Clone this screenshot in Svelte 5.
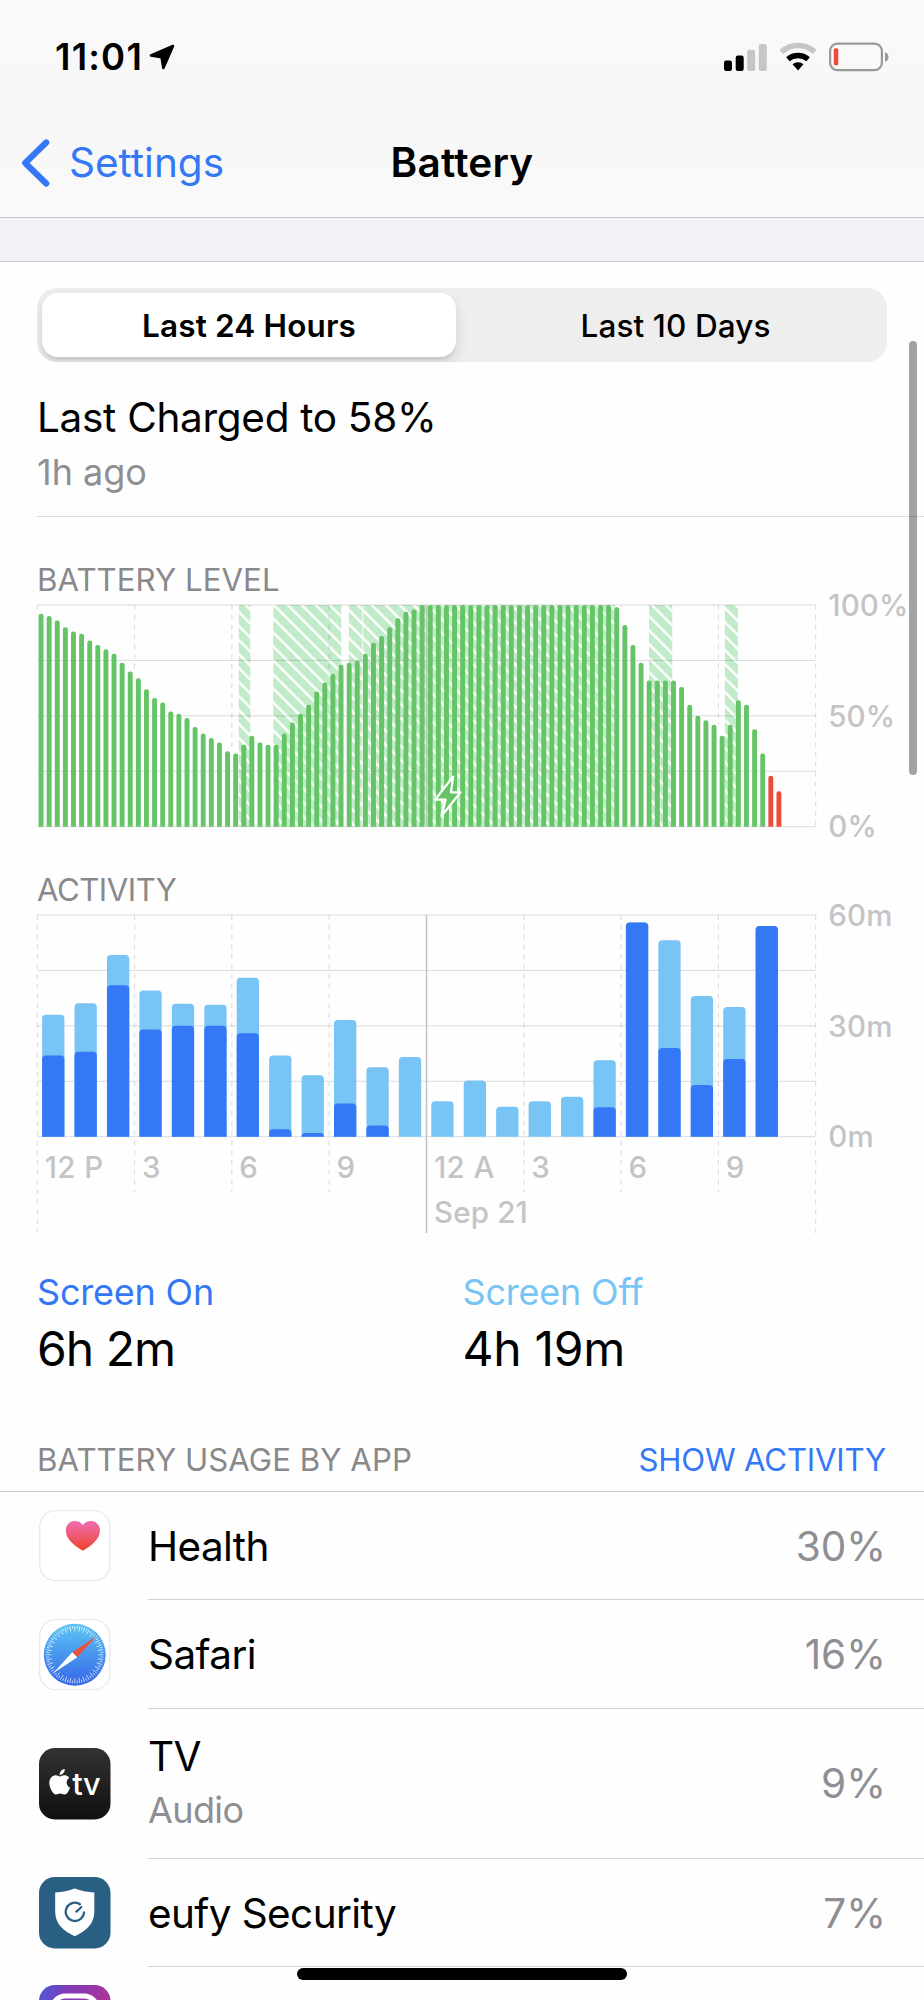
<script lang="ts">
	const levels = [
		96, 95, 93, 90, 88, 87, 84, 82, 80, 78, 74, 70, 67, 62, 58, 56, 52, 51, 49,
		45, 42, 40, 38, 34, 33, 37, 41, 38, 37, 37, 42, 47, 51, 55, 61, 65, 69, 73,
		74, 75, 78, 83, 86, 90, 94, 97, 98, 100, 100, 100, 100, 100, 100, 100, 100,
		100, 100, 100, 100, 100, 100, 100, 100, 100, 100, 100, 100, 100, 100, 100,
		100, 99, 91, 82, 74, 66, 66, 66, 66, 63, 55, 50, 48, 46, 41, 46, 57, 55, 44,
		33, 23, 16,
	];

	// Charging periods as [start, end] in plot pixels
	const charging = [
		[201.5, 213],
		[236, 304],
		[311.5, 325],
		[326, 577.6],
		[611.7, 635],
		[687.6, 700.6],
	];

	// Minutes per hour: total and screen-on part
	const activity = [
		{ total: 33, on: 22 },
		{ total: 36.1, on: 23 },
		{ total: 49.2, on: 41 },
		{ total: 39.6, on: 29 },
		{ total: 36, on: 30 },
		{ total: 35.7, on: 30 },
		{ total: 43, on: 28 },
		{ total: 22, on: 2 },
		{ total: 16.6, on: 1 },
		{ total: 31.6, on: 9 },
		{ total: 18.8, on: 3 },
		{ total: 21.6, on: 0 },
		{ total: 9.6, on: 0 },
		{ total: 15.2, on: 0 },
		{ total: 8.1, on: 0 },
		{ total: 9.6, on: 0 },
		{ total: 10.8, on: 0 },
		{ total: 20.7, on: 8 },
		{ total: 58, on: 58 },
		{ total: 53.2, on: 24 },
		{ total: 38.1, on: 14 },
		{ total: 35.1, on: 21 },
		{ total: 57, on: 57 },
	];

	const hours = ["12 P", "3", "6", "9", "12 A", "3", "6", "9"];

	const apps = [
		{ id: "health", name: "Health", detail: "", share: "30%" },
		{ id: "safari", name: "Safari", detail: "", share: "16%" },
		{ id: "tv", name: "TV", detail: "Audio", share: "9%" },
		{ id: "eufy", name: "eufy Security", detail: "", share: "7%" },
		{ id: "instagram", name: "", detail: "", share: "" },
	];

	const left = 37.3;
	const top = 6;
	const plotWidth = 778.4;
	const plotHeight = 221.7;
	const bottom = top + plotHeight;
	const section = plotWidth / 8;
	const slot = section / 12;
	const hourWidth = section / 3;

	const ticks = Array.from({ length: 72 }, (_, i) => i * 5);

	let range = $state("day");

	// Bar with only its upper corners rounded
	const bar = (x: number, w: number, h: number, r: number) => {
		const rr = Math.min(r, h);
		return `M${x} ${bottom}V${bottom - h + rr}q0 ${-rr} ${r} ${-rr}H${x + w - r}q${r} 0 ${r} ${rr}V${bottom}Z`;
	};

	// The dashed lines of the level chart stop where the bars begin
	const levelLineEnd = (i: number) => {
		if (i === 8) return bottom;
		const level = Math.max(levels[i * 12 - 1] ?? 0, levels[i * 12] ?? 0);
		return bottom - (level / 100) * plotHeight;
	};
</script>

{#snippet gridLines()}
	{#each [0, 1, 2, 3, 4] as i}
		<line
			class="grid"
			x1={left}
			x2={left + plotWidth}
			y1={top + (i * plotHeight) / 4}
			y2={top + (i * plotHeight) / 4}
		/>
	{/each}
{/snippet}

{#snippet scale(labels: string[])}
	{#each labels as label, i}
		<text class="tick" x="828.2" y={top + (i * plotHeight) / 2 + 10.7}>{label}</text>
	{/each}
{/snippet}

{#snippet appIcon(id: string)}
	<svg class="icon" viewBox="0 0 72 72">
		{#if id === "health"}
			<rect class="tile" x="0.75" y="0.75" width="70.5" height="70.5" rx="16" />
			<path
				d="M44.2 41C34 35 27 28.5 27 20.6 27 15 31 11 36 11c3.4 0 6.6 1.6 8.2 4.2C45.8 12.6 49 11 52.4 11c5 0 9 4 9 9.6 0 7.9-7 14.4-17.2 20.4Z"
				fill="url(#heart)"
			/>
		{:else if id === "safari"}
			<rect class="tile" x="0.75" y="0.75" width="70.5" height="70.5" rx="16" />
			<circle cx="36" cy="36" r="31.2" fill="url(#compass)" />
			{#each ticks as angle, i}
				<line
					x1="36"
					x2="36"
					y1="7"
					y2={i % 2 ? 10 : 12.5}
					stroke="#fff"
					stroke-opacity="0.75"
					stroke-width="0.9"
					transform="rotate({angle} 36 36)"
				/>
			{/each}
			<path d="M57.8 17.4 33.4 33.4 38.6 38.6Z" fill="#ea5140" />
			<path d="M14.6 54.4 33.4 33.4 38.6 38.6Z" fill="#fff" />
		{:else if id === "tv"}
			<rect width="72" height="72" rx="16" fill="url(#dark)" />
			<path
				transform="translate(8 21.2) scale(1.07)"
				fill="#fff"
				d="M12.152 6.896c-.948 0-2.415-1.078-3.96-1.04-2.04.027-3.91 1.183-4.961 3.014-2.117 3.675-.546 9.103 1.519 12.09 1.013 1.454 2.208 3.09 3.792 3.039 1.52-.065 2.09-.987 3.935-.987 1.831 0 2.35.987 3.96.948 1.637-.026 2.676-1.48 3.676-2.948 1.156-1.688 1.636-3.325 1.662-3.415-.039-.013-3.182-1.221-3.22-4.857-.026-3.04 2.48-4.494 2.597-4.559-1.429-2.09-3.623-2.324-4.39-2.376-2-.156-3.675 1.09-4.61 1.09zM15.53 3.83c.843-1.012 1.4-2.427 1.245-3.83-1.207.052-2.662.805-3.532 1.818-.78.896-1.454 2.338-1.273 3.714 1.338.104 2.715-.688 3.559-1.701"
			/>
			<text class="logo" x="33.6" y="47.2">tv</text>
		{:else if id === "eufy"}
			<rect width="72" height="72" rx="16" fill="#2a5f84" />
			<path
				d="M36 11.7c6 2.3 12.8 3.5 19.7 3.8V35c0 12.5-8.7 19.6-19.7 24.7C25 54.6 16.3 47.5 16.3 35V15.5C23.2 15.2 30 14 36 11.7Z"
				fill="#fff"
			/>
			<path
				d="M42 28a9.2 9.2 0 1 0 3.3 6.8M37 35.5l6.3-5.8"
				fill="none"
				stroke="#2a5f84"
				stroke-width="2.3"
			/>
		{:else}
			<rect width="72" height="72" rx="16" fill="url(#insta)" />
			<rect x="13.5" y="11" width="45" height="45" rx="13" fill="none" stroke="#fff" stroke-width="5" />
		{/if}
	</svg>
{/snippet}

<svg class="defs" width="0" height="0" aria-hidden="true">
	<defs>
		<linearGradient id="heart" x1="0" y1="0" x2="0" y2="1">
			<stop offset="0" stop-color="#f06fb4" />
			<stop offset="1" stop-color="#ec432c" />
		</linearGradient>
		<linearGradient id="compass" x1="0" y1="0" x2="0" y2="1">
			<stop offset="0" stop-color="#5cc6f4" />
			<stop offset="1" stop-color="#3565e9" />
		</linearGradient>
		<linearGradient id="dark" x1="0" y1="0" x2="0" y2="1">
			<stop offset="0" stop-color="#323232" />
			<stop offset="1" stop-color="#101010" />
		</linearGradient>
		<linearGradient id="insta" x1="0" y1="0" x2="1" y2="0.5">
			<stop offset="0" stop-color="#4560dc" />
			<stop offset="0.35" stop-color="#8139b8" />
			<stop offset="1" stop-color="#b8338f" />
		</linearGradient>
		<pattern
			id="hatch"
			width="9.9"
			height="9.9"
			patternUnits="userSpaceOnUse"
			patternTransform="rotate(45)"
		>
			<rect width="9.9" height="7.4" fill="#c1ebc9" />
		</pattern>
	</defs>
</svg>

<div class="screen">
	<header>
		<div class="status">
			<span class="time">11:01</span>
			<svg class="location" viewBox="0 0 26 26">
				<path d="M24 2 2 11.4 12.6 13.2 14.4 24Z" />
			</svg>
			<svg class="signal" viewBox="0 0 43 28">
				<rect y="17.6" width="8" height="10.4" rx="2.2" />
				<rect x="11.7" y="12.5" width="8" height="15.5" rx="2.2" />
				<rect class="off" x="23.2" y="6.7" width="8" height="21.3" rx="2.2" />
				<rect class="off" x="34.8" y="1" width="8" height="27" rx="2.2" />
			</svg>
			<svg class="wifi" viewBox="0 0 38 29">
				<path class="off" d="M2.3 9.9a25 25 0 0 1 33.4 0" />
				<path d="M8.9 17.3a15.5 15.5 0 0 1 20.2 0" />
				<path class="dot" d="M19 28.5 13.5 22.3a8.2 8.2 0 0 1 11 0Z" />
			</svg>
			<svg class="battery" viewBox="0 0 60 30">
				<rect class="case" x="1.1" y="1.6" width="51.8" height="26.6" rx="7.5" />
				<rect class="charge" x="4.8" y="6.3" width="4.5" height="17" rx="1.5" />
				<path class="cap" d="M56 10.2c4.7 1.6 4.7 8.2 0 9.8Z" />
			</svg>
		</div>
		<nav>
			<a class="back" href="#settings">
				<svg viewBox="0 0 30 50"><path d="M26.2 4.5 5.2 25l21 20.5" /></svg>
				Settings
			</a>
			<h1>Battery</h1>
		</nav>
	</header>
	<div class="band"></div>

	<main>
		<div class="segmented">
			<button class:active={range === "day"} onclick={() => (range = "day")}>
				Last 24 Hours
			</button>
			<button class:active={range === "days"} onclick={() => (range = "days")}>
				Last 10 Days
			</button>
		</div>

		<section class="charged">
			<p class="charged-title">Last Charged to 58%</p>
			<p class="charged-time">1h ago</p>
		</section>

		<h2 class="level-heading">BATTERY LEVEL</h2>
		<svg class="chart" width="924" height="272" viewBox="0 0 924 272">
			{#each charging as [from, to]}
				<rect x={left + from} y={top} width={to - from} height={plotHeight} fill="url(#hatch)" />
			{/each}
			{@render gridLines()}
			{#each [0, 1, 2, 3, 4, 5, 6, 7, 8] as i}
				{#if i === 4}
					<line class="midnight" x1={left + i * section} x2={left + i * section} y1={top} y2={bottom} />
				{:else}
					<line class="dashed" x1={left + i * section} x2={left + i * section} y1={top} y2={levelLineEnd(i)} />
				{/if}
			{/each}
			{#each levels as level, i}
				<path
					class={level > 25 ? "level" : "level low"}
					d={bar(left + i * slot + 1.3, 4.9, (level / 100) * plotHeight, 2.2)}
				/>
			{/each}
			<path class="bolt" d="M453.2 177.5 435 200.700h10.700L441.500 217l19-23.700h-9.600Z" />
			{@render scale(["100%", "50%", "0%"])}
		</svg>

		<h2 class="activity-heading">ACTIVITY</h2>
		<svg class="chart" width="924" height="361" viewBox="0 0 924 361">
			{@render gridLines()}
			{#each [0, 1, 2, 3, 4, 5, 6, 7, 8] as i}
				<line
					class={i === 4 ? "midnight" : "dashed"}
					x1={left + i * section}
					x2={left + i * section}
					y1={top}
					y2={i % 4 === 0 ? 324 : 283.5}
				/>
			{/each}
			{#each activity as { total, on }, i}
				<path
					class="screen-off"
					d={bar(left + i * hourWidth + 4.8, 22.3, (total / 60) * plotHeight, 3.8)}
				/>
				{#if on}
					<path
						class="screen-on"
						d={bar(left + i * hourWidth + 4.8, 22.3, (on / 60) * plotHeight, 3.8)}
					/>
				{/if}
			{/each}
			{#each hours as hour, i}
				<text class="tick hour" x={left + i * section + 7.4} y="268.7">{hour}</text>
			{/each}
			<text class="tick" x={left + 4 * section + 7.4} y="313.6">Sep 21</text>
			{@render scale(["60m", "30m", "0m"])}
		</svg>

		<dl class="totals">
			<div>
				<dt class="on">Screen On</dt>
				<dd>6h 2m</dd>
			</div>
			<div>
				<dt class="off">Screen Off</dt>
				<dd>4h 19m</dd>
			</div>
		</dl>

		<div class="usage-head">
			<h2>BATTERY USAGE BY APP</h2>
			<button>SHOW ACTIVITY</button>
		</div>
		<ul>
			{#each apps as app (app.id)}
				<li class={app.id}>
					{@render appIcon(app.id)}
					{#if app.name}
						<div class="row">
							<div class="label">
								<span class="name">{app.name}</span>
								{#if app.detail}<span class="detail">{app.detail}</span>{/if}
							</div>
							<span class="share">{app.share}</span>
						</div>
					{/if}
				</li>
			{/each}
		</ul>
	</main>

	<div class="scrollbar"></div>
	<div class="home"></div>
</div>

<style>
	:global(body) {
		margin: 0;
		background: #fefefe;
	}

	.defs {
		position: absolute;
	}

	.screen {
		position: relative;
		width: 924px;
		height: 2000px;
		overflow: hidden;
		background: #fefefe;
		color: #000;
		font-family: Inter, "Liberation Sans", sans-serif;
	}

	h1,
	h2,
	p,
	dl,
	dd,
	ul {
		margin: 0;
		padding: 0;
	}

	button {
		padding: 0;
		border: 0;
		background: none;
		font: inherit;
		color: inherit;
	}

	header {
		box-sizing: border-box;
		height: 218px;
		border-bottom: 1px solid #c5c5c9;
		background: linear-gradient(#fafafb, #f7f7f7 45%, #f9f9f9);
	}

	.status {
		display: flex;
		align-items: center;
		height: 113px;
		padding: 0 35px 0 55px;
	}

	.time {
		font-size: 36.5px;
		font-weight: 600;
		letter-spacing: 1.2px;
	}

	.location {
		width: 26px;
		height: 26px;
		margin-left: 6px;
	}

	.location path {
		stroke: #000;
		stroke-width: 2.6;
		stroke-linejoin: round;
	}

	.signal {
		width: 43px;
		height: 28px;
		margin-left: auto;
	}

	.signal .off {
		fill: #c6c6c6;
	}

	.wifi {
		width: 38px;
		height: 29px;
		margin: 0 12.5px 0 12px;
	}

	.wifi path {
		fill: none;
		stroke: #000;
		stroke-width: 5.4;
	}

	.wifi .off {
		stroke: #c6c6c6;
	}

	.wifi .dot {
		fill: #000;
		stroke: none;
	}

	.battery {
		width: 60px;
		height: 30px;
	}

	.battery .case {
		fill: none;
		stroke: #989898;
		stroke-width: 2.2;
	}

	.battery .charge {
		fill: #ee4d3d;
	}

	.battery .cap {
		fill: #989898;
	}

	nav {
		display: grid;
		grid-template-columns: 1fr auto 1fr;
		align-items: center;
		height: 99px;
		padding: 0 20px;
		font-size: 40.5px;
	}

	.back {
		display: flex;
		align-items: center;
		gap: 19px;
		color: #3478f6;
		text-decoration: none;
	}

	.back svg {
		width: 30px;
		height: 50px;
	}

	.back path {
		fill: none;
		stroke: #3478f6;
		stroke-width: 6.2;
		stroke-linecap: round;
		stroke-linejoin: round;
	}

	h1 {
		font-size: 40.5px;
		font-weight: 600;
		letter-spacing: 0.2px;
	}

	.band {
		height: 43px;
		border-bottom: 1px solid #c8c7cc;
		background: #f2f1f6;
	}

	.segmented {
		display: grid;
		grid-template-columns: 420px 1fr;
		box-sizing: border-box;
		height: 74px;
		margin: 26px 37px 0;
		padding: 5px;
		border-radius: 20px;
		background: #eee;
		overflow: hidden;
	}

	.segmented button {
		border-radius: 16px;
		font-size: 31.5px;
		font-weight: 500;
		letter-spacing: 0.1px;
	}

	.segmented button.active {
		margin-right: 6px;
		background: #fff;
		box-shadow:
			0 7px 14px rgba(0, 0, 0, 0.12),
			0 3px 2px rgba(0, 0, 0, 0.05);
		font-weight: 600;
		letter-spacing: 0.15px;
	}

	.segmented button:last-child:not(.active) {
		padding-left: 7px;
	}

	.charged {
		margin: 31px 0 0 37px;
		padding-bottom: 22px;
		border-bottom: 1px solid #dcdcde;
	}

	.charged-title {
		font-size: 40.5px;
		line-height: 50px;
		letter-spacing: -0.3px;
	}

	.charged-time {
		margin-top: 7px;
		font-size: 36px;
		line-height: 44px;
		color: #8e8e93;
	}

	h2 {
		padding-left: 37px;
		font-size: 31.2px;
		font-weight: 400;
		line-height: 38px;
		letter-spacing: 0.06px;
		color: #89898b;
	}

	h2.level-heading {
		margin-top: 44px;
	}

	h2.activity-heading {
		letter-spacing: -0.5px;
	}

	.chart {
		display: block;
		overflow: visible;
	}

	.grid {
		stroke: #000;
		stroke-opacity: 0.14;
		stroke-width: 1;
	}

	.dashed {
		stroke: #000;
		stroke-opacity: 0.15;
		stroke-width: 1;
		stroke-dasharray: 5 4.8;
	}

	.midnight {
		stroke: #c2c2c3;
		stroke-width: 1.5;
	}

	.level {
		fill: #65c466;
	}

	.level.low {
		fill: #eb4d3d;
	}

	.bolt {
		fill: #65c466;
		stroke: #fff;
		stroke-width: 2.2;
		stroke-linejoin: round;
	}

	.screen-off {
		fill: #78c4f5;
	}

	.screen-on {
		fill: #3478f6;
	}

	.tick {
		fill: #c4c4c6;
		font-size: 29.5px;
		font-weight: 500;
		letter-spacing: 0.2px;
	}

	.hour {
		letter-spacing: 0.4px;
	}

	.totals {
		display: grid;
		grid-template-columns: 425.5px 1fr;
		padding-left: 37px;
	}

	dt {
		font-size: 36px;
		line-height: 44px;
		letter-spacing: -0.2px;
	}

	dt.on {
		color: #3478f6;
	}

	dt.off {
		color: #78c4f5;
	}

	dd {
		margin-top: 5px;
		font-size: 48px;
		line-height: 59px;
		letter-spacing: -0.3px;
	}

	dt.on + dd {
		letter-spacing: -1px;
	}

	.usage-head {
		display: flex;
		justify-content: space-between;
		margin-top: 63px;
		padding: 0 38px 12px 0;
		border-bottom: 1px solid #c8c8cb;
	}

	.usage-head button {
		font-size: 31.2px;
		line-height: 38px;
		letter-spacing: -0.2px;
		color: #3478f6;
	}

	ul {
		list-style: none;
	}

	li {
		display: flex;
		align-items: center;
		gap: 37.5px;
		height: 108px;
		padding-left: 39px;
	}

	li.safari {
		height: 109px;
	}

	li.tv {
		height: 150px;
	}

	.icon {
		flex: none;
		width: 71.5px;
		height: 71.5px;
	}

	.tile {
		fill: #fff;
		stroke: #e6e6e6;
		stroke-width: 1.2;
	}

	.logo {
		fill: #fff;
		font-size: 31px;
		font-weight: 500;
		letter-spacing: -0.4px;
	}

	.row {
		display: flex;
		flex: 1;
		align-items: center;
		align-self: stretch;
		justify-content: space-between;
		padding-right: 38px;
		border-bottom: 1px solid #d3d3d5;
	}

	.label {
		display: flex;
		flex-direction: column;
		gap: 6px;
	}

	.name,
	.share {
		padding-top: 2px;
		font-size: 40.5px;
		line-height: 50px;
	}

	.name {
		letter-spacing: -0.6px;
	}

	.share {
		color: #8e8e93;
	}

	.detail {
		padding-bottom: 3px;
		font-size: 36px;
		line-height: 44px;
		letter-spacing: -0.6px;
		color: #8e8e93;
	}

	.tv .name,
	.tv .share {
		padding-top: 0;
	}

	.scrollbar {
		position: absolute;
		top: 341px;
		left: 909px;
		width: 8px;
		height: 434px;
		border-radius: 4px;
		background: rgba(0, 0, 0, 0.36);
	}

	.home {
		position: absolute;
		top: 1968px;
		left: 297px;
		width: 330px;
		height: 12px;
		border-radius: 6px;
		background: #000;
	}
</style>
